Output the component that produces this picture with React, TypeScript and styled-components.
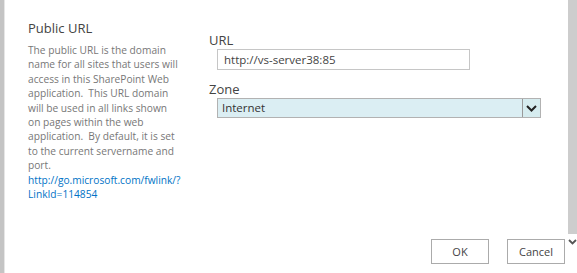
import React from "react";
import styled, { createGlobalStyle } from "styled-components";

const Global = createGlobalStyle`
  html, body { margin: 0; padding: 0; background: #fff; }
  body { font-family: "Segoe UI", "Open Sans", "Noto Sans", sans-serif; }
`;

const Page = styled.div`
  display: flex;
  width: 577px;
  height: 273px;
  overflow: hidden;
  background: #fff;
`;

const LeftEdge = styled.div`
  width: 4px;
  flex: none;
  background: #c4c4c4;
  border-right: 1px solid #e6e6e6;
`;

const Main = styled.div`
  flex: 1;
  display: flex;
  flex-direction: column;
  padding-left: 23px;
`;

const Section = styled.div`
  display: flex;
  flex: 1;
`;

const InfoColumn = styled.div`
  width: 181px;
  flex: none;
  padding-top: 19px;
`;

const Heading = styled.div`
  font-size: 13px;
  color: #444;
  line-height: 18px;
  margin-bottom: 6px;
`;

const Description = styled.div`
  font-size: 10.2px;
  color: #777;
  line-height: 14.4px;
`;

const Line = styled.span`
  display: block;
  white-space: pre;
`;

const Link = styled.a`
  color: #0072c6;
  text-decoration: none;
  display: block;
`;

const FieldColumn = styled.div`
  flex: 1;
  padding-top: 32px;
  display: flex;
  flex-direction: column;
`;

const Label = styled.div`
  font-size: 13px;
  color: #444;
  line-height: 16px;
`;

const TextInput = styled.div`
  margin: 1px 0 0 8px;
  width: 253px;
  height: 21px;
  box-sizing: border-box;
  border: 1px solid #c6c6c6;
  font-size: 11.5px;
  color: #444;
  line-height: 19px;
  padding-left: 6px;
`;

const FieldGap = styled.div`
  height: 11px;
`;

const Select = styled.div`
  margin: 1px 0 0 8px;
  width: 324px;
  height: 20px;
  box-sizing: border-box;
  border: 1px solid #b2b2b2;
  background: #dbeef3;
  display: flex;
  align-items: stretch;
`;

const SelectValue = styled.div`
  flex: 1;
  font-size: 11.5px;
  color: #333;
  line-height: 18px;
  padding-left: 4px;
`;

const SelectArrow = styled.div`
  width: 17px;
  border-left: 1px solid #9a9a9a;
  display: flex;
  align-items: center;
  justify-content: center;
  background: #d6ecef;
`;

const ButtonRow = styled.div`
  display: flex;
  justify-content: flex-end;
  gap: 18px;
  padding-right: 3px;
  padding-bottom: 9px;
`;

const Button = styled.button`
  width: 58px;
  height: 25px;
  box-sizing: border-box;
  background: #fff;
  border: 1px solid #ababab;
  font-family: inherit;
  font-size: 11px;
  color: #444;
  padding: 0;
`;

const Scrollbar = styled.div`
  width: 9px;
  flex: none;
  display: flex;
  flex-direction: column;
`;

const Track = styled.div`
  height: 234px;
  background: #cdcdcd;
`;

const ScrollArrow = styled.div`
  height: 20px;
  display: flex;
  align-items: flex-start;
  justify-content: center;
  padding-top: 5px;
`;

export default function App() {
  return (
    <>
      <Global />
      <Page>
        <LeftEdge />
        <Main>
          <Section>
            <InfoColumn>
              <Heading>Public URL</Heading>
              <Description>
                <Line>The public URL is the domain</Line>
                <Line>name for all sites that users will</Line>
                <Line>access in this SharePoint Web</Line>
                <Line>application.  This URL domain</Line>
                <Line>will be used in all links shown</Line>
                <Line>on pages within the web</Line>
                <Line>application.  By default, it is set</Line>
                <Line>to the current servername and</Line>
                <Line>port.</Line>
                <Link href="#">
                  <Line>http://go.microsoft.com/fwlink/?</Line>
                  <Line>LinkId=114854</Line>
                </Link>
              </Description>
            </InfoColumn>
            <FieldColumn>
              <Label>URL</Label>
              <TextInput>http://vs-server38:85</TextInput>
              <FieldGap />
              <Label>Zone</Label>
              <Select>
                <SelectValue>Internet</SelectValue>
                <SelectArrow>
                  <svg width="11" height="7" viewBox="0 0 11 7">
                    <path d="M1 1 L5.5 5.5 L10 1" fill="none" stroke="#222" strokeWidth="2" />
                  </svg>
                </SelectArrow>
              </Select>
            </FieldColumn>
          </Section>
          <ButtonRow>
            <Button>OK</Button>
            <Button>Cancel</Button>
          </ButtonRow>
        </Main>
        <Scrollbar>
          <Track />
          <ScrollArrow>
            <svg width="9" height="6" viewBox="0 0 9 6">
              <path d="M1 1 L4.5 4.5 L8 1" fill="none" stroke="#555" strokeWidth="1.8" />
            </svg>
          </ScrollArrow>
        </Scrollbar>
      </Page>
    </>
  );
}
